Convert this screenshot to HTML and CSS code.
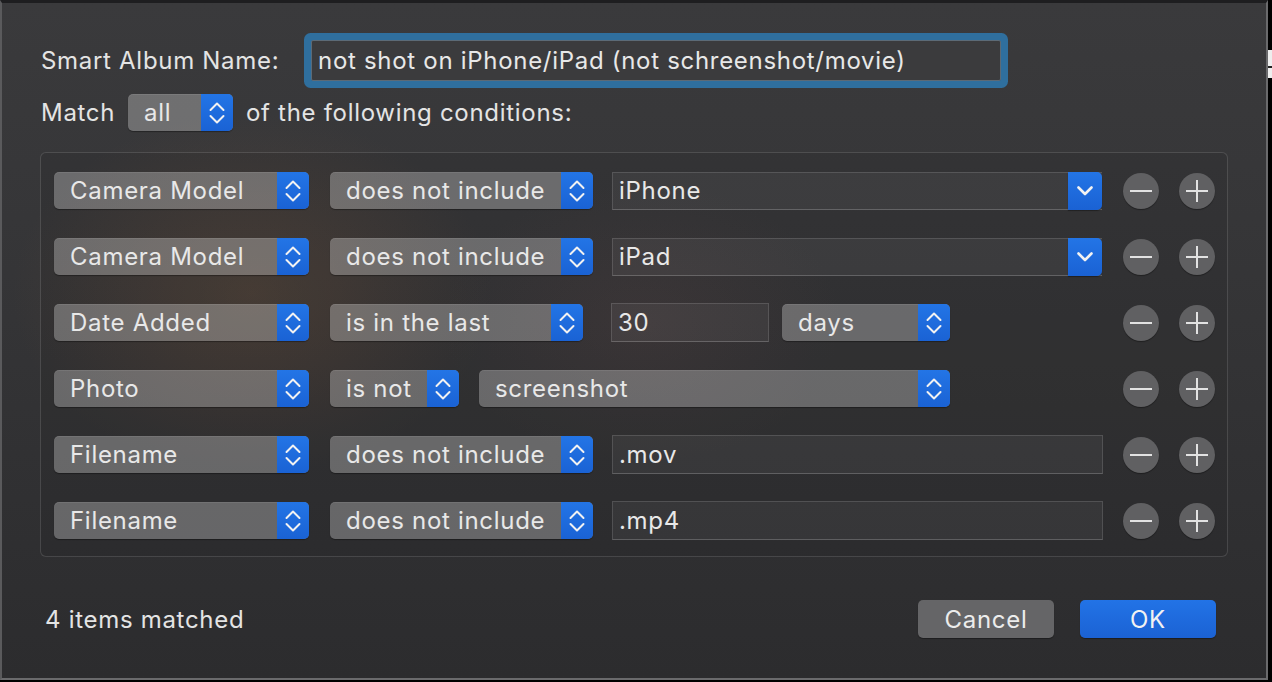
FILE: index.html
```html
<!DOCTYPE html>
<html>
<head>
<meta charset="utf-8">
<link rel="stylesheet" href="styles.css">
</head>
<body>
<div class="screen">
  <div class="dialog">
    <div class="name-row">
      <span class="label">Smart Album Name:</span>
      <div class="name-field">not shot on iPhone/iPad (not schreenshot/movie)</div>
    </div>
    <div class="match-row">
      <span class="label match-label">Match</span>
      <div class="popup w-all"><span class="ptext">all</span><span class="stepper"><svg viewBox="0 0 16 26" width="16" height="26"><path d="M1.5 10 L8 3.5 L14.5 10 M1.5 16 L8 22.5 L14.5 16"/></svg></span></div>
      <span class="label">of the following conditions:</span>
    </div>

    <div class="conditions">
      <div class="crow">
        <div class="popup w-c1"><span class="ptext">Camera Model</span><span class="stepper"><svg viewBox="0 0 16 26" width="16" height="26"><path d="M1.5 10 L8 3.5 L14.5 10 M1.5 16 L8 22.5 L14.5 16"/></svg></span></div>
        <div class="popup w-c2"><span class="ptext">does not include</span><span class="stepper"><svg viewBox="0 0 16 26" width="16" height="26"><path d="M1.5 10 L8 3.5 L14.5 10 M1.5 16 L8 22.5 L14.5 16"/></svg></span></div>
        <div class="combo w-combo"><span class="ftext">iPhone</span><span class="drop"><svg viewBox="0 0 18 10" width="18" height="10"><path d="M2.5 1.5 L9 8 L15.5 1.5"/></svg></span></div>
        <div class="btns"><span class="circ"><svg viewBox="0 0 36 36" width="36" height="36"><path d="M7 18 H29"/></svg></span><span class="circ"><svg viewBox="0 0 36 36" width="36" height="36"><path d="M7 18 H29 M18 7 V29"/></svg></span></div>
      </div>
      <div class="crow">
        <div class="popup w-c1"><span class="ptext">Camera Model</span><span class="stepper"><svg viewBox="0 0 16 26" width="16" height="26"><path d="M1.5 10 L8 3.5 L14.5 10 M1.5 16 L8 22.5 L14.5 16"/></svg></span></div>
        <div class="popup w-c2"><span class="ptext">does not include</span><span class="stepper"><svg viewBox="0 0 16 26" width="16" height="26"><path d="M1.5 10 L8 3.5 L14.5 10 M1.5 16 L8 22.5 L14.5 16"/></svg></span></div>
        <div class="combo w-combo"><span class="ftext">iPad</span><span class="drop"><svg viewBox="0 0 18 10" width="18" height="10"><path d="M2.5 1.5 L9 8 L15.5 1.5"/></svg></span></div>
        <div class="btns"><span class="circ"><svg viewBox="0 0 36 36" width="36" height="36"><path d="M7 18 H29"/></svg></span><span class="circ"><svg viewBox="0 0 36 36" width="36" height="36"><path d="M7 18 H29 M18 7 V29"/></svg></span></div>
      </div>
      <div class="crow">
        <div class="popup w-c1"><span class="ptext">Date Added</span><span class="stepper"><svg viewBox="0 0 16 26" width="16" height="26"><path d="M1.5 10 L8 3.5 L14.5 10 M1.5 16 L8 22.5 L14.5 16"/></svg></span></div>
        <div class="popup w-c2s"><span class="ptext">is in the last</span><span class="stepper"><svg viewBox="0 0 16 26" width="16" height="26"><path d="M1.5 10 L8 3.5 L14.5 10 M1.5 16 L8 22.5 L14.5 16"/></svg></span></div>
        <div class="field w-num"><span class="ftext">30</span></div>
        <div class="popup w-days"><span class="ptext">days</span><span class="stepper"><svg viewBox="0 0 16 26" width="16" height="26"><path d="M1.5 10 L8 3.5 L14.5 10 M1.5 16 L8 22.5 L14.5 16"/></svg></span></div>
        <div class="btns"><span class="circ"><svg viewBox="0 0 36 36" width="36" height="36"><path d="M7 18 H29"/></svg></span><span class="circ"><svg viewBox="0 0 36 36" width="36" height="36"><path d="M7 18 H29 M18 7 V29"/></svg></span></div>
      </div>
      <div class="crow">
        <div class="popup w-c1"><span class="ptext">Photo</span><span class="stepper"><svg viewBox="0 0 16 26" width="16" height="26"><path d="M1.5 10 L8 3.5 L14.5 10 M1.5 16 L8 22.5 L14.5 16"/></svg></span></div>
        <div class="popup w-isnot"><span class="ptext">is not</span><span class="stepper"><svg viewBox="0 0 16 26" width="16" height="26"><path d="M1.5 10 L8 3.5 L14.5 10 M1.5 16 L8 22.5 L14.5 16"/></svg></span></div>
        <div class="popup w-shot"><span class="ptext">screenshot</span><span class="stepper"><svg viewBox="0 0 16 26" width="16" height="26"><path d="M1.5 10 L8 3.5 L14.5 10 M1.5 16 L8 22.5 L14.5 16"/></svg></span></div>
        <div class="btns"><span class="circ"><svg viewBox="0 0 36 36" width="36" height="36"><path d="M7 18 H29"/></svg></span><span class="circ"><svg viewBox="0 0 36 36" width="36" height="36"><path d="M7 18 H29 M18 7 V29"/></svg></span></div>
      </div>
      <div class="crow">
        <div class="popup w-c1"><span class="ptext">Filename</span><span class="stepper"><svg viewBox="0 0 16 26" width="16" height="26"><path d="M1.5 10 L8 3.5 L14.5 10 M1.5 16 L8 22.5 L14.5 16"/></svg></span></div>
        <div class="popup w-c2"><span class="ptext">does not include</span><span class="stepper"><svg viewBox="0 0 16 26" width="16" height="26"><path d="M1.5 10 L8 3.5 L14.5 10 M1.5 16 L8 22.5 L14.5 16"/></svg></span></div>
        <div class="field w-text"><span class="ftext">.mov</span></div>
        <div class="btns"><span class="circ"><svg viewBox="0 0 36 36" width="36" height="36"><path d="M7 18 H29"/></svg></span><span class="circ"><svg viewBox="0 0 36 36" width="36" height="36"><path d="M7 18 H29 M18 7 V29"/></svg></span></div>
      </div>
      <div class="crow">
        <div class="popup w-c1"><span class="ptext">Filename</span><span class="stepper"><svg viewBox="0 0 16 26" width="16" height="26"><path d="M1.5 10 L8 3.5 L14.5 10 M1.5 16 L8 22.5 L14.5 16"/></svg></span></div>
        <div class="popup w-c2"><span class="ptext">does not include</span><span class="stepper"><svg viewBox="0 0 16 26" width="16" height="26"><path d="M1.5 10 L8 3.5 L14.5 10 M1.5 16 L8 22.5 L14.5 16"/></svg></span></div>
        <div class="field w-text"><span class="ftext">.mp4</span></div>
        <div class="btns"><span class="circ"><svg viewBox="0 0 36 36" width="36" height="36"><path d="M7 18 H29"/></svg></span><span class="circ"><svg viewBox="0 0 36 36" width="36" height="36"><path d="M7 18 H29 M18 7 V29"/></svg></span></div>
      </div>
    </div>

    <div class="footer">
      <span class="count">4 items matched</span>
      <div class="actions">
        <button class="btn cancel">Cancel</button>
        <button class="btn ok">OK</button>
      </div>
    </div>
  </div>
  <div class="cursor"></div>
</div>
</body>
</html>
```

FILE: styles.css
```css
html, body {
  margin: 0;
  padding: 0;
  background: #000;
}
body {
  width: 1272px;
  height: 682px;
  overflow: hidden;
  font-family: Inter, "Liberation Sans", sans-serif;
  font-size: 24px;
  letter-spacing: 0.7px;
  color: #e4e4e4;
}
.screen {
  position: relative;
  width: 1272px;
  height: 682px;
}
.dialog {
  box-sizing: border-box;
  width: 1268px;
  height: 680px;
  border-top: 3px solid #1e1e20;
  border-left: 2px solid #5a5a5c;
  border-right: 2px solid #6a6a6c;
  border-bottom: 2px solid #6a6a6c;
  padding: 30px 39px 0 38px;
  background:
    radial-gradient(ellipse 240px 180px at 250px 290px, rgba(125, 88, 60, 0.3), rgba(125, 88, 60, 0) 100%),
    radial-gradient(ellipse 200px 140px at 640px 320px, rgba(110, 80, 80, 0.18), rgba(110, 80, 80, 0) 100%),
    linear-gradient(180deg, #3a3a3c 0%, #353537 40%, #2c2c2e 100%);
  display: flex;
  flex-direction: column;
}
.label {
  white-space: nowrap;
}
.name-row {
  display: flex;
  align-items: center;
  height: 54px;
  padding-left: 1px;
}
.name-row .label {
  width: 264px;
  flex: none;
}
.name-field {
  box-sizing: border-box;
  width: 690px;
  height: 41px;
  margin-left: 6px;
  background: #3b3b3d;
  border: 1px solid #5c6a76;
  border-radius: 2px;
  box-shadow: 0 0 0 7px #2f6f9e;
  padding-left: 6px;
  display: flex;
  align-items: center;
  color: #e8e8e8;
  white-space: nowrap;
}
.match-row {
  display: flex;
  align-items: center;
  height: 37px;
  margin-top: 7px;
  padding-left: 1px;
}
.match-label {
  width: 87px;
  flex: none;
}
.match-row .popup {
  margin-right: 13px;
}
.popup {
  box-sizing: border-box;
  height: 37px;
  display: flex;
  align-items: stretch;
  border-radius: 5px;
  background: rgba(255, 255, 255, 0.28);
  box-shadow: 0 1px 1px rgba(0, 0, 0, 0.35), inset 0 1px 0 rgba(255, 255, 255, 0.08);
  overflow: hidden;
  flex: none;
}
.ptext {
  flex: 1;
  display: flex;
  align-items: center;
  padding-left: 16px;
  white-space: nowrap;
  color: #e8e8e8;
}
.stepper {
  width: 32px;
  flex: none;
  background: linear-gradient(180deg, #2375e6 0%, #1a62d4 100%);
  display: flex;
  align-items: center;
  justify-content: center;
}
.stepper svg path, .drop svg path {
  fill: none;
  stroke: #f2f2f2;
  stroke-width: 2;
  stroke-linecap: round;
  stroke-linejoin: round;
}
.drop svg path {
  stroke-width: 2.6;
}
.w-all { width: 105px; }
.w-c1 { width: 255px; }
.w-c2 { width: 263px; }
.w-c2s { width: 253px; }
.w-isnot { width: 129px; }
.w-days { width: 168px; }
.w-shot { width: 471px; }

.conditions {
  box-sizing: border-box;
  width: 1188px;
  height: 405px;
  margin-top: 21px;
  border: 1px solid rgba(255, 255, 255, 0.13);
  border-radius: 6px;
  background: rgba(0, 0, 0, 0.06);
  padding: 19px 12px 0 13px;
  display: flex;
  flex-direction: column;
  gap: 29px;
}
.crow {
  display: flex;
  align-items: center;
  height: 37px;
}
.crow > .popup:nth-child(2) {
  margin-left: 21px;
}
.crow > :nth-child(3) {
  margin-left: 19px;
}
.crow > .w-num {
  margin-left: 28px;
}
.crow > .w-shot {
  margin-left: 20px;
}
.crow > .w-days {
  margin-left: 13px;
}
.field, .combo {
  box-sizing: border-box;
  height: 39px;
  display: flex;
  align-items: stretch;
  background: rgba(255, 255, 255, 0.05);
  border: 1px solid rgba(255, 255, 255, 0.13);
  border-bottom-color: rgba(255, 255, 255, 0.2);
  flex: none;
}
.combo {
  height: 38px;
  border-right: none;
}
.ftext {
  flex: 1;
  display: flex;
  align-items: center;
  padding-left: 6px;
  color: #e8e8e8;
  white-space: nowrap;
}
.drop {
  width: 34px;
  margin: -1px 0 -1px 0;
  border-radius: 0 5px 5px 0;
  background: linear-gradient(180deg, #2375e6 0%, #1a62d4 100%);
  display: flex;
  align-items: center;
  justify-content: center;
  box-shadow: 0 1px 1px rgba(0, 0, 0, 0.35);
}
.w-combo { width: 490px; }
.w-num { width: 158px; }
.w-text { width: 491px; }
.btns {
  margin-left: auto;
  display: flex;
  gap: 20px;
}
.circ {
  width: 36px;
  height: 36px;
  border-radius: 50%;
  background: #606062;
  box-shadow: 0 1px 1px rgba(0, 0, 0, 0.35);
  display: block;
}
.circ svg {
  display: block;
}
.circ svg path {
  fill: none;
  stroke: #e2e2e2;
  stroke-width: 2;
}
.footer {
  display: flex;
  align-items: center;
  height: 38px;
  margin-top: 43px;
  padding-left: 5px;
  padding-right: 11px;
}
.count {
  color: #e4e4e4;
}
.actions {
  margin-left: auto;
  display: flex;
  gap: 26px;
}
.btn {
  width: 136px;
  height: 38px;
  border: none;
  border-radius: 5px;
  font-family: Inter, "Liberation Sans", sans-serif;
  font-size: 24px;
  letter-spacing: 0.7px;
  color: #ececec;
  padding: 0;
  box-shadow: 0 1px 1px rgba(0, 0, 0, 0.35);
}
.cancel {
  background: #656567;
}
.ok {
  background: linear-gradient(180deg, #2273e6 0%, #1b62d4 100%);
  color: #f2f2f2;
}
.cursor {
  position: absolute;
  left: 1268px;
  top: 50px;
  width: 4px;
  height: 28px;
  background: linear-gradient(180deg, #eee 0%, #eee 57%, #222 57%, #222 66%, #eee 66%, #eee 100%);
}
```
